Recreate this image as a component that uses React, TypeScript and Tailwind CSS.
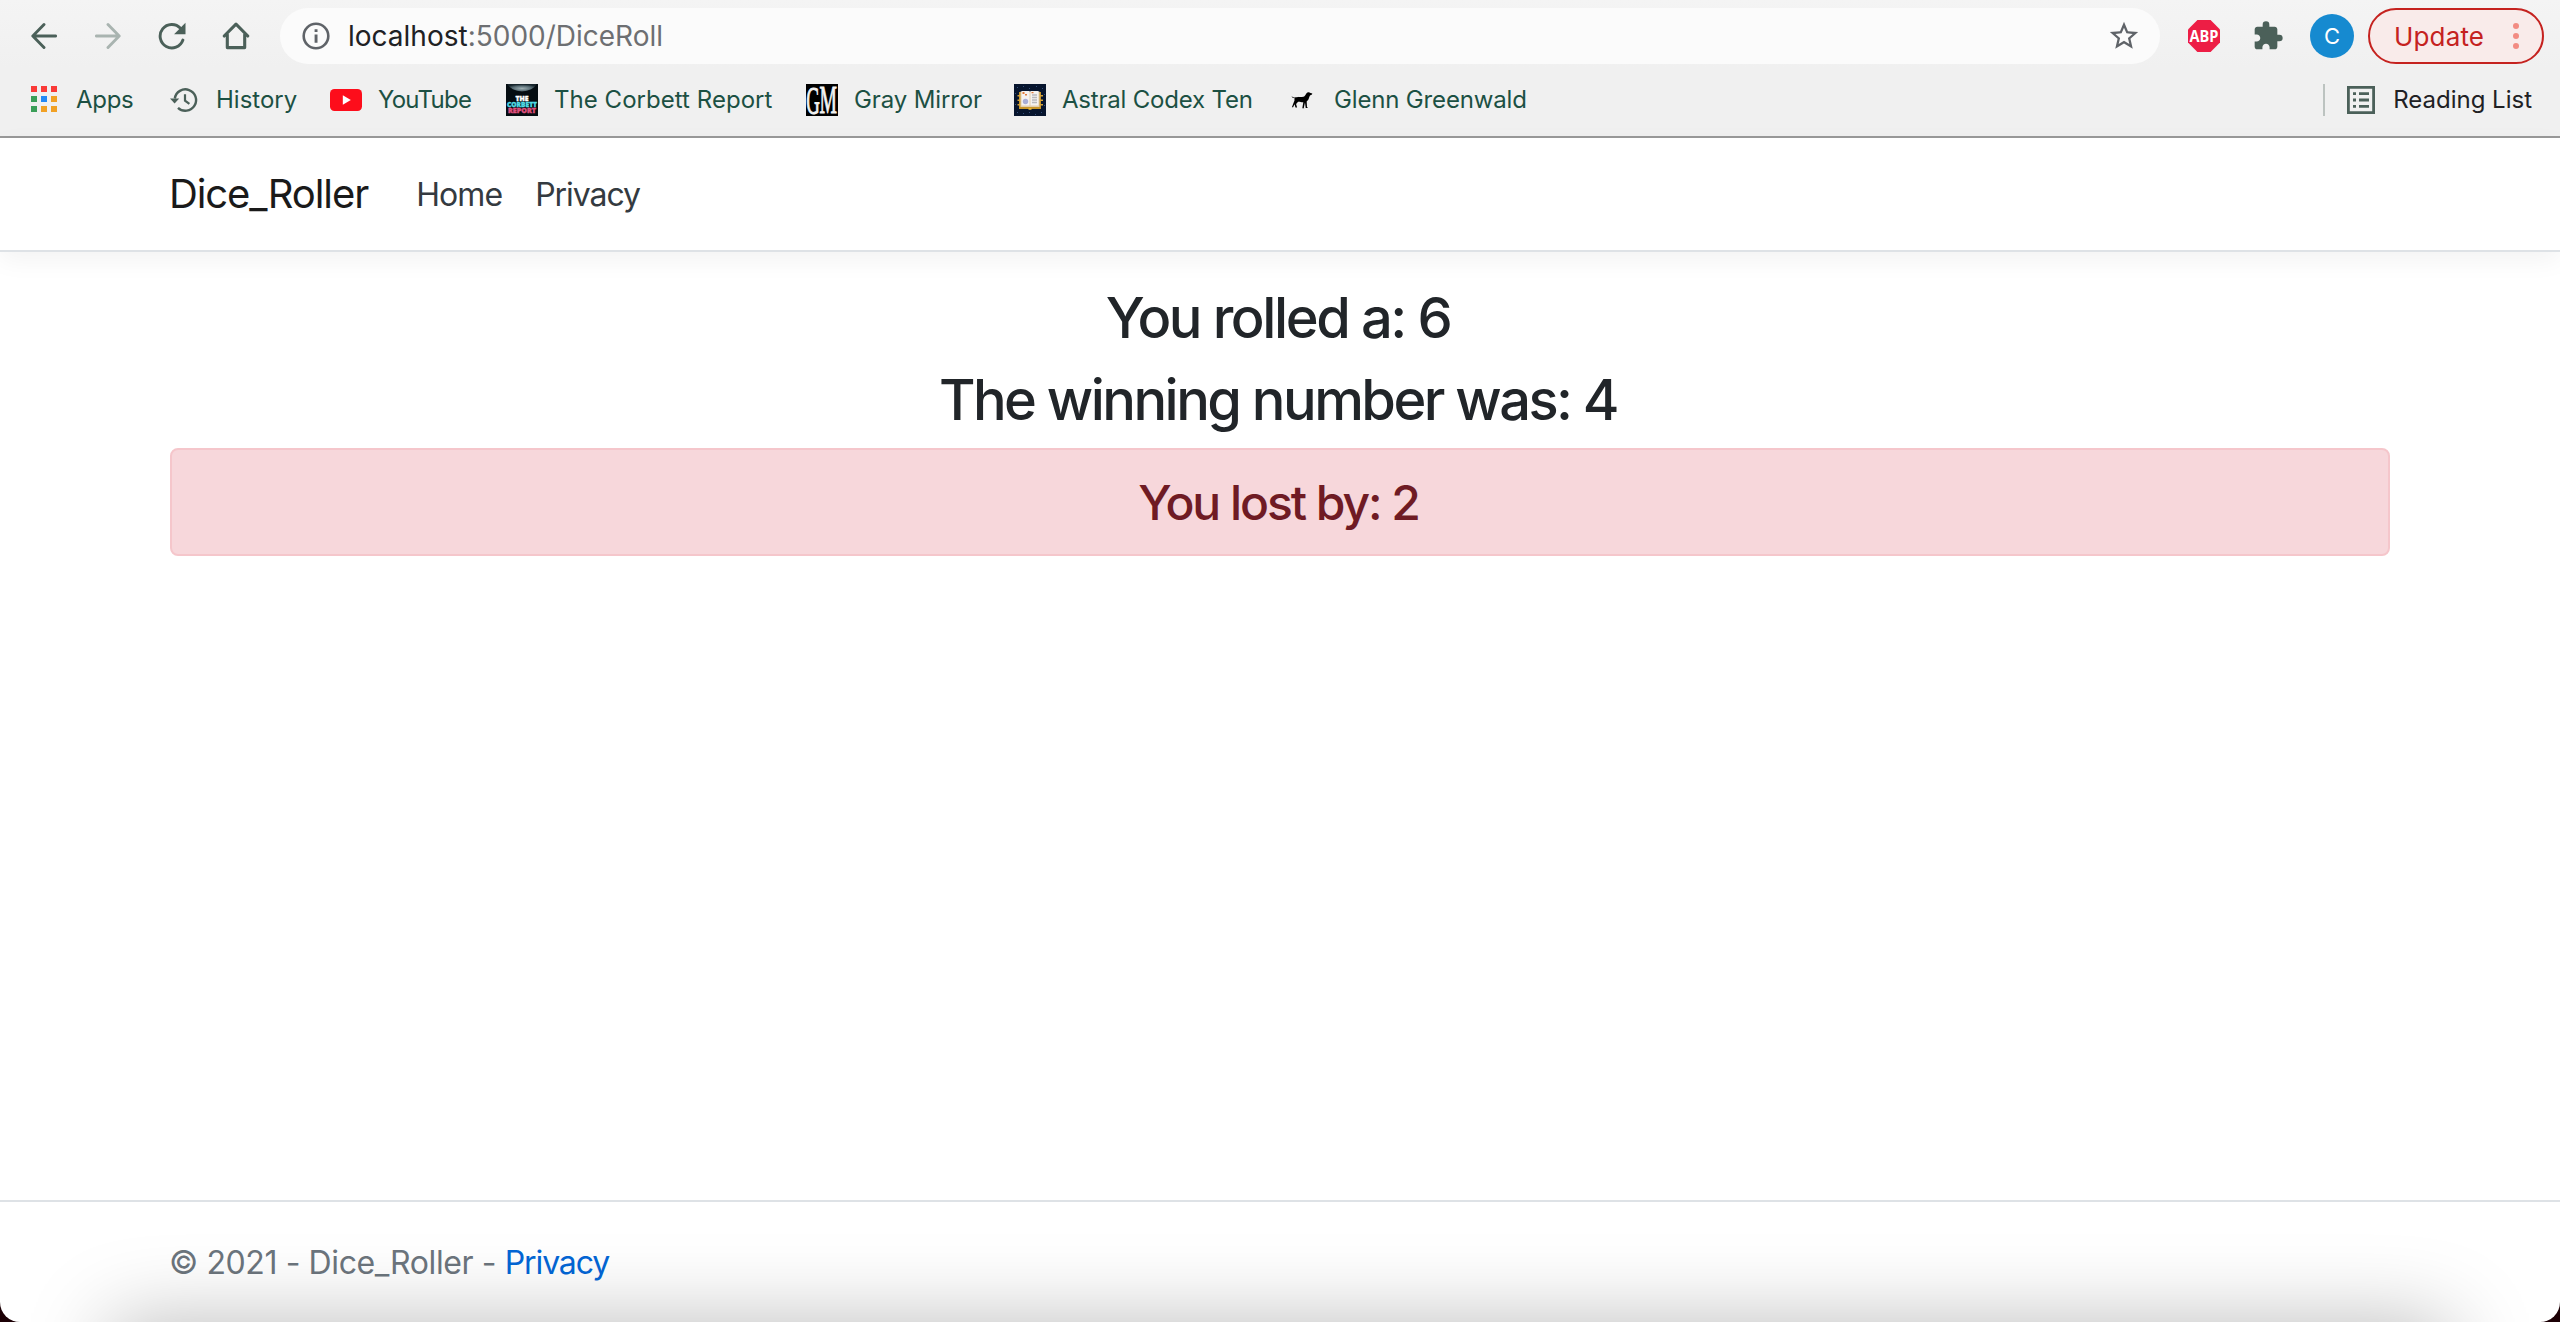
import React from "react";

const BackArrow = ({ flip = false }: { flip?: boolean }) => (
  <svg
    width="26"
    height="26"
    viewBox="0 0 26 26"
    fill="none"
    strokeWidth="2.9"
    strokeLinecap="round"
    strokeLinejoin="round"
    className={flip ? "-scale-x-100 stroke-[#a9b4b0]" : "stroke-[#4b6059]"}
  >
    <path d="M24.6 13H2M13 1.6 1.8 13 13 24.4" />
  </svg>
);

const Reload = () => (
  <svg width="28" height="28" viewBox="0 0 28 28" fill="none">
    <path d="M22.5 6.3A11.7 11.7 0 1 0 24.9 18" stroke="#4b6059" strokeWidth="2.9" strokeLinecap="round" />
    <path d="M27.5.8v11.4H16.1z" fill="#4b6059" />
  </svg>
);

const House = () => (
  <svg width="28" height="28" viewBox="0 0 28 28" fill="none" stroke="#4b6059" strokeWidth="3.1" strokeLinejoin="round" strokeLinecap="round">
    <path d="M2.2 14 14 2.2 25.8 14M5.3 12.500v13.1h17.4V12.500" />
  </svg>
);

const Info = () => (
  <svg width="28" height="28" viewBox="0 0 28 28" fill="none">
    <circle cx="14" cy="14" r="12.3" stroke="#5f6368" strokeWidth="2.6" />
    <path d="M12.6 7.2h2.9v2.9h-2.9zM12.6 12.4h2.9v8.4h-2.9z" fill="#5f6368" />
  </svg>
);

const Star = () => (
  <svg width="34" height="34" viewBox="0 0 24 24" fill="#5f6368">
    <path d="M22 9.24l-7.19-.62L12 2 9.19 8.63 2 9.24l5.46 4.73L5.82 21 12 17.27 18.18 21l-1.63-7.03L22 9.24zM12 15.4l-3.76 2.27 1-4.28-3.32-2.88 4.38-.38L12 6.1l1.71 4.04 4.38.38-3.32 2.88 1 4.28L12 15.4z" />
  </svg>
);

const AdBlock = () => (
  <svg width="32" height="32" viewBox="0 0 32 32">
    <path d="M9.4 0h13.2L32 9.4v13.2L22.6 32H9.4L0 22.6V9.4z" fill="#ed1e45" />
    <text x="16" y="21.6" textAnchor="middle" textLength="29" lengthAdjust="spacingAndGlyphs" fill="#fff" fontFamily="Open Sans, sans-serif" fontWeight="700" fontSize="16">
      ABP
    </text>
  </svg>
);

const Puzzle = () => (
  <svg width="32" height="32" viewBox="0 0 24 24" fill="#4b6059">
    <path d="M20.5 11H19V7c0-1.1-.9-2-2-2h-4V3.5a2.5 2.5 0 0 0-5 0V5H4c-1.1 0-1.99.9-1.99 2v3.8H3.5c1.49 0 2.7 1.21 2.7 2.7s-1.21 2.7-2.7 2.7H2V20c0 1.1.9 2 2 2h3.8v-1.5c0-1.49 1.21-2.7 2.7-2.7 1.49 0 2.7 1.21 2.7 2.7V22H17c1.1 0 2-.9 2-2v-4h1.5a2.5 2.5 0 0 0 0-5z" />
  </svg>
);

const AppsGrid = () => (
  <svg width="32" height="32" viewBox="0 0 32 32">
    <path d="M3 2h6v6H3zM13 2h6v6h-6zM23 2h6v6h-6z" fill="#f93a37" />
    <path d="M3 12h6v6H3zM3 22h6v6H3z" fill="#3a9e58" />
    <path d="M13 12h6v6h-6z" fill="#2389f5" />
    <path d="M23 12h6v6h-6zM13 22h6v6h-6zM23 22h6v6h-6z" fill="#f1a125" />
  </svg>
);

const HistoryIcon = () => (
  <svg width="32" height="32" viewBox="0 0 32 32" fill="none">
    <path d="M7.8 14.5A10.7 10.7 0 1 1 11 23.8" stroke="#4b6059" strokeWidth="2.4" />
    <path d="M3 14.6h9.2l-4.6 5z" fill="#4b6059" />
    <path d="M18 10.2v6.4l4.4 3.2" stroke="#4b6059" strokeWidth="2.2" />
  </svg>
);

const YouTube = () => (
  <svg width="32" height="32" viewBox="0 0 32 32">
    <rect y="5" width="32" height="22" rx="4.5" fill="#fd0d1b" />
    <path d="M12.8 11.3v9.4l8-4.7z" fill="#fff" />
  </svg>
);

const Corbett = () => (
  <svg width="32" height="32" viewBox="0 0 32 32" className="overflow-visible">
    <defs>
      <radialGradient id="moon" cx="50%" cy="60%" r="55%">
        <stop offset="0" stopColor="#9fb0b4" />
        <stop offset="0.6" stopColor="#566a72" />
        <stop offset="1" stopColor="#16242b" />
      </radialGradient>
    </defs>
    <path d="M0 0h32v32H0z" fill="#050d12" />
    <path d="M1.5 0h29a15 10 0 0 1-29 0z" fill="url(#moon)" />
    <g fontFamily="Open Sans, sans-serif" fontWeight="800" fontSize="7.4" textAnchor="middle" strokeWidth="0.4">
      <text x="16" y="16.500" textLength="13" lengthAdjust="spacingAndGlyphs" fill="#fff" stroke="#fff">THE</text>
      <text x="16" y="22.800" textLength="30" lengthAdjust="spacingAndGlyphs" fill="#4fdbe6" stroke="#4fdbe6">CORBETT</text>
      <text x="16" y="29" textLength="28" lengthAdjust="spacingAndGlyphs" fill="#e0507f" stroke="#e0507f">REPORT</text>
    </g>
  </svg>
);

const GrayMirror = () => (
  <svg width="32" height="32" viewBox="0 0 32 32" className="overflow-visible">
    <path d="M0 0h32v32H0z" fill="#000" />
    <g fill="#f2f2f2" stroke="#f2f2f2" strokeWidth="0.5" fontFamily="Liberation Serif, serif" fontSize="20">
      <text transform="translate(0.3 29.5) scale(0.94 2.05)" x="0" y="0">G</text>
      <text transform="translate(13.5 29) scale(0.98 2)" x="0" y="0">M</text>
    </g>
  </svg>
);

const Codex = () => (
  <svg width="32" height="32" viewBox="0 0 32 32">
    <path d="M0 0h32v32H0z" fill="#07152e" />
    <path
      d="M3 3h1v1H3zM9 2h1v1H9zM15 4h1v1h-1zM22 2h1v1h-1zM28 4h1v1h-1zM1 9h1v1H1zM30 10h1v1h-1zM1 20h1v1H1zM30 21h1v1h-1zM3 28h1v1H3zM9 29h1v1H9zM15 28h1v1h-1zM21 30h1v1h-1zM27 28h1v1h-1z"
      fill="#35507c"
    />
    <path d="M5 8h22v17H5z" fill="#c8952a" />
    <path d="M3.500 11h3v1.500h-3zM3.500 15.500h3V17h-3zM3.500 20h3v1.500h-3zM26 11h3v1.500h-3zM26 15.500h3V17h-3zM26 20h3v1.500h-3z" fill="#d6a43a" />
    <path d="M6.500 7.500h19V23h-19z" fill="#e3cfae" />
    <path d="M7.500 7h8v14.500h-8zM16.500 7h8v14.500h-8z" fill="#f5f2f0" />
    <path d="M8.500 8h2v2h-2zM11 10h2v1.500h-2zM17.500 8h2v1.200h-2z" fill="#e27a3b" />
    <circle cx="11.500" cy="17.500" r="2.700" fill="#a9aed6" />
    <path d="M18 11h5M18 13.500h5M18 16h5M18 18.500h5" stroke="#b9b9bd" strokeWidth="1.300" />
    <path d="M14.500 24h3v1.800h-3z" fill="#e6b637" />
  </svg>
);

const Dog = () => (
  <svg width="32" height="32" viewBox="0 0 32 32" fill="#000">
    <path d="M5.500 12.200c1.800 1.300 3.200 1.400 4.800 1.100 2.500-.4 5-.2 7.200-.5 1.500-.6 2.200-2.200 3-3.500.7-1 2.300-1.200 3.300-.6l2.500.9c-.1 1-.9 1.600-2.300 1.900-.8 1.300-.9 2.600-1.600 4-.6 1-1.500 1.300-1.700 2.200l.3 5.300 1 .9h-2.300l-.7-5.500-1.200 5.400.5.500h-2l1-6c-2 .1-3.500-.7-5.200-.5l-2 2.200 1 3.600h-1.600l-1-3.400-1.400 3.100h-1.200l1.600-4.300 1-2.600c-.1-1-.1-1.600.2-2.200-1.400.1-2.700-.7-3.200-2z" />
  </svg>
);

const ReadingIcon = () => (
  <svg width="28" height="28" viewBox="0 0 28 28" fill="#4b6059">
    <path d="M0 0h28v28H0zM2.800 2.800v22.400h22.400V2.800z" fillRule="evenodd" />
    <path d="M6 6.300h3v2.800H6zM6 12.600h3v2.800H6zM6 18.900h3v2.800H6zM12 6.300h10v2.800H12zM12 12.600h10v2.800H12zM12 18.900h10v2.800H12z" />
  </svg>
);

const bookmarks = [
  { label: "Apps", icon: <AppsGrid />, box: "w-[139px]", text: "tracking-[-0.3px]" },
  { label: "History", icon: <HistoryIcon />, box: "w-[163px]", text: "ml-px" },
  { label: "YouTube", icon: <YouTube />, box: "w-[176px]", text: "tracking-[-0.75px]" },
  { label: "The Corbett Report", icon: <Corbett />, box: "w-[300px]", text: "tracking-[0.04px]" },
  { label: "Gray Mirror", icon: <GrayMirror />, box: "w-[208px]", text: "tracking-[-0.12px]" },
  { label: "Astral Codex Ten", icon: <Codex />, box: "w-[272px]", text: "tracking-[-0.2px]" },
  { label: "Glenn Greenwald", icon: <Dog />, box: "w-[260px]", text: "tracking-[-0.16px]" },
];

const NavSlot = ({ children }: { children: React.ReactNode }) => (
  <button className="flex w-16 items-center justify-center">{children}</button>
);

const BrowserChrome = () => (
  <div className="h-[138px] shrink-0 border-b-2 border-[#999999] bg-linear-to-b from-[#f4f4f4] to-[#f0f0f0] to-50%">
    <div className="flex h-[72px] items-center pl-3 pr-4">
      <NavSlot><BackArrow /></NavSlot>
      <NavSlot><BackArrow flip /></NavSlot>
      <NavSlot><Reload /></NavSlot>
      <NavSlot><House /></NavSlot>
      <div className="ml-3 flex h-14 w-[1880px] items-center rounded-full bg-[#fbfbfb] pl-[22px] pr-[19px]">
        <Info />
        <span className="ml-[18px] flex-1 text-[28px] leading-none text-[#6d6f72]">
          <span className="text-[#202124]">localhost</span>:5000/DiceRoll
        </span>
        <Star />
      </div>
      <div className="ml-7 flex items-center">
        <AdBlock />
        <div className="ml-8"><Puzzle /></div>
        <div className="ml-[26px] flex size-11 items-center justify-center rounded-full bg-[#168ad0] text-[22px] text-white">C</div>
      </div>
      <button className="ml-[14px] flex h-14 w-44 items-center rounded-full border-2 border-[#c5221f] bg-[#f9ebea] pl-6 text-[26px] leading-none tracking-[0.15px] text-[#c5221f]">
        <span className="pt-px">Update</span>
        <svg className="ml-[29px]" width="6" height="26" viewBox="0 0 6 26" fill="#f28b82">
          <circle cx="3" cy="3" r="3" />
          <circle cx="3" cy="13" r="3" />
          <circle cx="3" cy="23" r="3" />
        </svg>
      </button>
    </div>
    <div className="flex h-14 items-center pl-7 text-2xl leading-none text-[#1c5043]">
      {bookmarks.map((b) => (
        <div key={b.label} className={`flex shrink-0 items-center gap-4 whitespace-nowrap ${b.box}`}>
          <span className="shrink-0">{b.icon}</span>
          <span className={b.text}>{b.label}</span>
        </div>
      ))}
      <div className="ml-auto flex items-center pr-[28px] text-[#202124]">
        <div className="h-8 w-0.5 bg-[#bcc3c0]" />
        <div className="ml-[22px]"><ReadingIcon /></div>
        <span className="ml-[18px] whitespace-nowrap">Reading List</span>
      </div>
    </div>
  </div>
);

export default function App() {
  return (
    <div className="h-[1322px] w-[2560px] overflow-hidden bg-[#1c0005] font-['Inter',sans-serif]">
      <div className="relative flex h-full flex-col overflow-hidden rounded-b-[20px] bg-white">
        <BrowserChrome />
        <header className="flex h-[114px] shrink-0 items-center border-b-2 border-[#dee2e6] px-[170px] shadow-[0_8px_24px_rgba(0,0,0,0.05)]">
          <a className="-ml-px text-[40px] leading-none tracking-[-1.1px] text-[#1a1a1a]">Dice_Roller</a>
          <nav className="ml-[48px] flex gap-[33px] pt-0.5 text-[32px] leading-none text-[#343a40]">
            <a className="tracking-[-0.9px]">Home</a>
            <a className="tracking-[-1.05px]">Privacy</a>
          </nav>
        </header>
        <main className="flex-1 px-[170px] pt-[33px] text-center font-medium text-[#212529]">
          <h1 className="mb-4 pr-[4px] text-[56px] leading-[66px] tracking-[-2.4px]">You rolled a: 6</h1>
          <h1 className="mb-[15px] pr-[4px] text-[56px] leading-[66px] tracking-[-2.54px]">The winning number was: 4</h1>
          <div className="flex h-[108px] items-center justify-center rounded-lg border-2 border-[#f5c6cb] bg-[#f7d7db] pr-[3px] pt-0.5">
            <h2 className="text-[48px] leading-none tracking-[-2.05px] text-[#6f1b24]">You lost by: 2</h2>
          </div>
        </main>
        <footer className="flex h-[122px] shrink-0 items-center border-t-2 border-[#dee2e6] pl-[169px] pr-[170px] pt-0.5 text-[32px] leading-none text-[#6c757d]">
          <span className="whitespace-pre tracking-[-0.4px]">© 2021 - Dice_Roller - </span>
          <a className="tracking-[-1.1px] text-[#0366d6]">Privacy</a>
        </footer>
        <div className="pointer-events-none absolute inset-x-[110px] top-full h-40 shadow-[0_0_84px_rgba(0,0,0,0.27)]" />
      </div>
    </div>
  );
}
